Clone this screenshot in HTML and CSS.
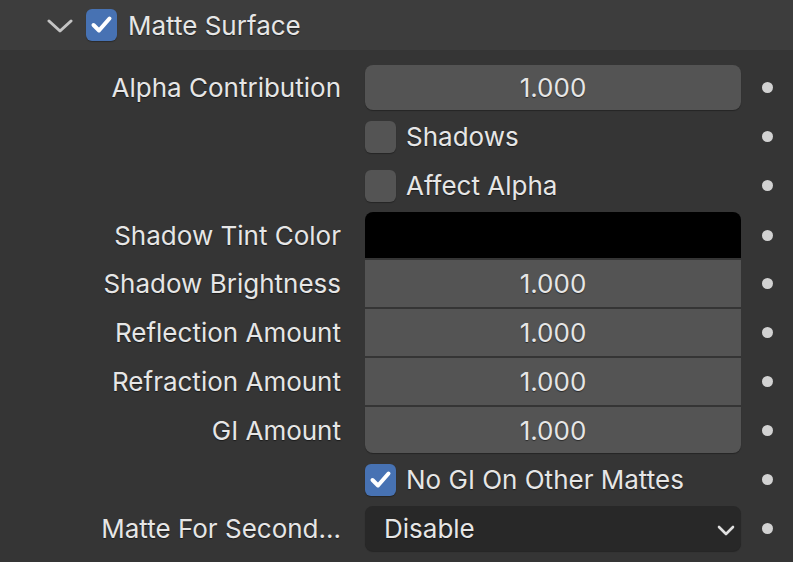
FILE: index.html
```html
<!DOCTYPE html>
<html>
<head>
<meta charset="utf-8">
<link rel="stylesheet" href="styles.css">
</head>
<body>
<div class="header">
  <svg class="chev" width="26" height="14" viewBox="0 0 26 14"><path d="M2 2 L13 12 L24 2" fill="none" stroke="#c4c4c4" stroke-width="3" stroke-linecap="round" stroke-linejoin="round"/></svg>
  <span class="box on hbox"><svg width="31" height="31" viewBox="0 0 31 31"><path d="M7.5 16 L13 21.5 L23.5 9.5" fill="none" stroke="#fff" stroke-width="4" stroke-linecap="round" stroke-linejoin="round"/></svg></span>
  <span class="htitle">Matte Surface</span>
</div>
<div class="body">
  <div class="row">
    <div class="label">Alpha Contribution</div>
    <div class="field num single">1.000</div>
    <div class="dotcell"><span class="dot"></span></div>
  </div>
  <div class="row">
    <div class="label"></div>
    <div class="check"><span class="box"></span><span class="ctext">Shadows</span></div>
    <div class="dotcell"><span class="dot"></span></div>
  </div>
  <div class="row">
    <div class="label"></div>
    <div class="check"><span class="box"></span><span class="ctext">Affect Alpha</span></div>
    <div class="dotcell"><span class="dot"></span></div>
  </div>
  <div class="group">
    <div class="row g1">
      <div class="label">Shadow Tint Color</div>
      <div class="field color top"></div>
      <div class="dotcell"><span class="dot"></span></div>
    </div>
    <div class="row g2">
      <div class="label">Shadow Brightness</div>
      <div class="field num mid">1.000</div>
      <div class="dotcell"><span class="dot"></span></div>
    </div>
    <div class="row g2">
      <div class="label">Reflection Amount</div>
      <div class="field num mid">1.000</div>
      <div class="dotcell"><span class="dot"></span></div>
    </div>
    <div class="row g2">
      <div class="label">Refraction Amount</div>
      <div class="field num mid">1.000</div>
      <div class="dotcell"><span class="dot"></span></div>
    </div>
    <div class="row g1">
      <div class="label">GI Amount</div>
      <div class="field num bottom">1.000</div>
      <div class="dotcell"><span class="dot"></span></div>
    </div>
  </div>
  <div class="row">
    <div class="label"></div>
    <div class="check"><span class="box on"><svg width="31" height="31" viewBox="0 0 31 31"><path d="M7.5 16 L13 21.5 L23.5 9.5" fill="none" stroke="#fff" stroke-width="4" stroke-linecap="round" stroke-linejoin="round"/></svg></span><span class="ctext">No GI On Other Mattes</span></div>
    <div class="dotcell"><span class="dot"></span></div>
  </div>
  <div class="row">
    <div class="label">Matte For Second...</div>
    <div class="field menu single"><span>Disable</span><svg width="18" height="11" viewBox="0 0 18 11"><path d="M2 2 L9 9 L16 2" fill="none" stroke="#e0e0e0" stroke-width="2.6" stroke-linecap="round" stroke-linejoin="round"/></svg></div>
    <div class="dotcell"><span class="dot"></span></div>
  </div>
</div>
</body>
</html>
```
FILE: styles.css
```css
html, body {
  margin: 0;
  padding: 0;
}
body {
  width: 793px;
  height: 562px;
  overflow: hidden;
  background: #353535;
  font-family: Inter, "Noto Sans", sans-serif;
  font-size: 26px;
  color: #e6e6e6;
}
.header {
  height: 50px;
  background: #3d3d3d;
  display: flex;
  align-items: center;
  padding-left: 47px;
  box-sizing: border-box;
}
.chev {
  margin-top: 2px;
}
.hbox {
  margin-left: 13px;
  margin-top: -1px;
}
.htitle {
  margin-left: 11px;
  font-size: 26px;
  text-shadow: 0 1px 1px rgba(0,0,0,0.5);
}
.body {
  padding-top: 15px;
  display: flex;
  flex-direction: column;
  gap: 4px;
}
.group {
  display: flex;
  flex-direction: column;
  gap: 2px;
}
.row {
  display: grid;
  grid-template-columns: 341px 376px 52px;
  column-gap: 24px;
  height: 45px;
  align-items: stretch;
}
.row.g1 { height: 46px; }
.row.g2 { height: 47px; }
.label {
  display: flex;
  align-items: center;
  justify-content: flex-end;
  white-space: nowrap;
  text-shadow: 0 1px 1px rgba(0,0,0,0.5);
}
.field {
  background: #545454;
  display: flex;
  align-items: center;
  box-sizing: border-box;
  text-shadow: 0 1px 1px rgba(0,0,0,0.5);
}
.field.single {
  border-radius: 8px;
  box-shadow: 0 1px 1px rgba(0,0,0,0.3);
}
.field.top { border-radius: 8px 8px 0 0; }
.field.bottom { border-radius: 0 0 8px 8px; box-shadow: 0 1px 1px rgba(0,0,0,0.3); }
.field.num { justify-content: center; }
.field.color { background: #000; }
.field.menu {
  background: #282828;
  justify-content: space-between;
  padding-left: 19px;
  padding-right: 6px;
}
.field.menu svg { margin-top: 3px; }
.check {
  display: flex;
  align-items: center;
}
.box {
  width: 31px;
  height: 32px;
  border-radius: 6px;
  background: #545454;
  box-shadow: 0 1px 1px rgba(0,0,0,0.3);
  display: inline-flex;
  align-items: center;
  justify-content: center;
  flex: none;
}
.box.on { background: #4772b3; }
.ctext {
  margin-left: 10px;
  white-space: nowrap;
  text-shadow: 0 1px 1px rgba(0,0,0,0.5);
}
.dotcell {
  display: flex;
  align-items: center;
  justify-content: center;
  margin-left: -24px;
  width: 52px;
}
.dot {
  width: 11px;
  height: 11px;
  border-radius: 50%;
  background: #d2d2d2;
}
```
